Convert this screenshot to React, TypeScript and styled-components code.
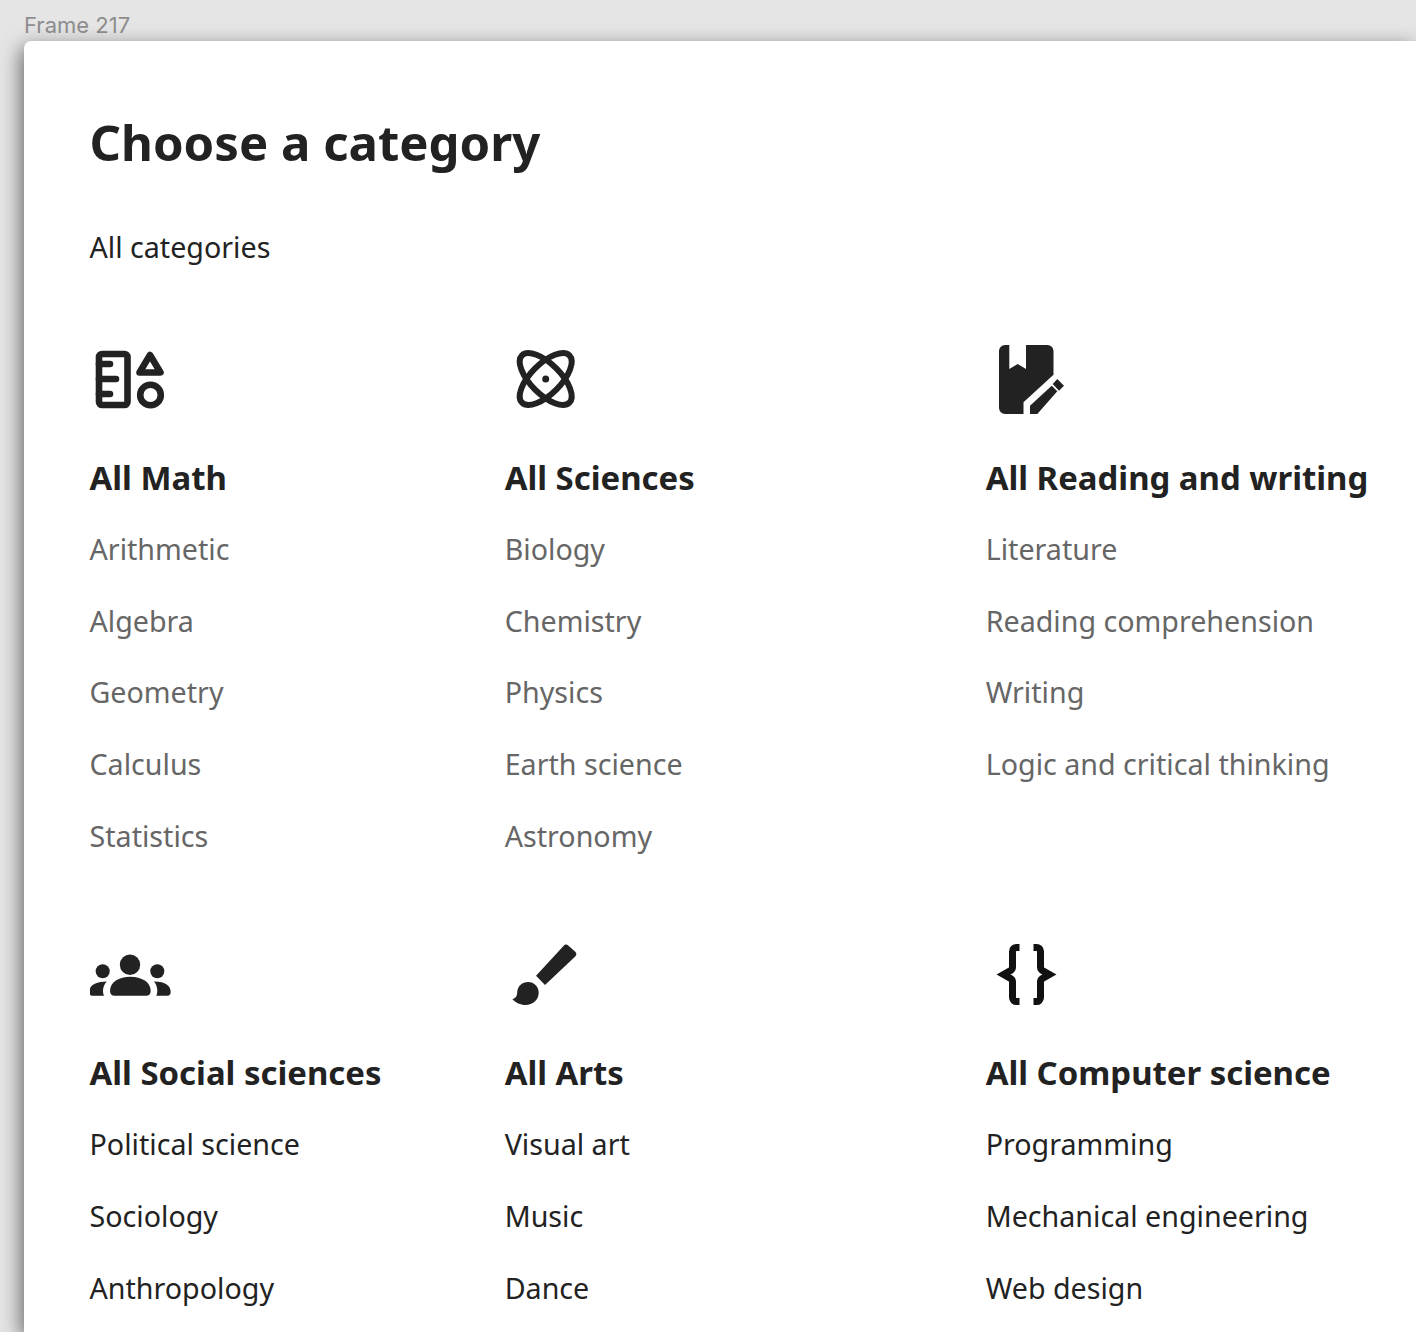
import React from "react";
import styled, { createGlobalStyle } from "styled-components";

const Global = createGlobalStyle`
  html, body { margin: 0; padding: 0; background: #e5e5e5; overflow: hidden; }
  body { font-family: "Noto Sans", sans-serif; }
`;

const Page = styled.div`
  height: 1332px;
  overflow: hidden;
  display: flex;
  flex-direction: column;
  background: #e5e5e5;
`;

const FrameLabel = styled.div`
  height: 41px;
  padding: 12px 0 0 24px;
  box-sizing: border-box;
  font-family: Inter, sans-serif;
  font-size: 22px;
  line-height: 26px;
  color: #8e8e8e;
`;

const Card = styled.main`
  flex: 1;
  margin-left: 24px;
  padding: 67.5px 0 0 65.5px;
  background: #fff;
  border-top-left-radius: 7px;
  box-shadow: -3px 6px 20px rgba(0, 0, 0, 0.55);
`;

const Title = styled.h1`
  margin: 0;
  font-size: 49.1px;
  line-height: 66px;
  font-weight: 700;
  color: #222222;
`;

const AllLink = styled.div`
  margin-top: 52.5px;
  font-size: 28.65px;
  line-height: 40px;
  color: #222222;
`;

const Grid = styled.div`
  margin-top: 76px;
  display: grid;
  grid-template-columns: 415.2px 481px 1fr;
  row-gap: 67px;
`;

const Section = styled.section`
  display: flex;
  flex-direction: column;
`;

const IconBox = styled.svg`
  display: block;
  width: 90px;
  height: 72px;
  margin-left: 0.5px;
  color: #222222;
`;

const Heading = styled.h2`
  margin: 41px 0 13.2px;
  font-size: 32.9px;
  line-height: 44px;
  font-weight: 700;
  color: #222222;
  white-space: nowrap;
`;

const Item = styled.div<{ $muted: boolean }>`
  height: 71.6px;
  line-height: 71.6px;
  font-size: 28.65px;
  color: ${(p) => (p.$muted ? "#666666" : "#222222")};
  white-space: nowrap;
`;

const MathIcon = () => (
  <IconBox viewBox="90 344 90 72" fill="none" stroke="currentColor" strokeWidth="6.6">
    <rect x="99" y="355" width="28.5" height="51" rx="3" />
    <path d="M99 365h11M99 380h17M99 395h11" strokeLinecap="round" />
    <path d="M150 356 L160.500 373.500 L139.500 373.500 Z" strokeLinejoin="round" />
    <circle cx="150.5" cy="396" r="10.3" />
  </IconBox>
);

const AtomIcon = () => (
  <IconBox viewBox="505 344 90 72" fill="none" stroke="currentColor" strokeWidth="6">
    <ellipse cx="545.7" cy="380" rx="33.5" ry="15" transform="rotate(45 545.7 380)" />
    <ellipse cx="545.7" cy="380" rx="33.5" ry="15" transform="rotate(-45 545.7 380)" />
    <circle cx="545.7" cy="380" r="3.5" fill="currentColor" stroke="none" />
  </IconBox>
);

const BookIcon = () => (
  <IconBox viewBox="986 344 90 72" fill="currentColor">
    <path d="M1005 346h4.3v24l8.4-5 8.3 5v-24h21.5a6 6 0 0 1 6 6v23.7l-30 27.6V415h-18.5a6 6 0 0 1-6-6v-57a6 6 0 0 1 6-6z" />
    <path d="M1030 406.7L1051.7 386.7 1057.3 392.3 1037.3 415H1030z" />
    <path d="M1052.7 385L1057.3 380 1064 386.7 1059 391.7z" />
  </IconBox>
);

const PeopleIcon = () => (
  <IconBox viewBox="90 939 90 72" fill="currentColor">
    <circle cx="130" cy="965.7" r="10.2" />
    <circle cx="102.7" cy="972.3" r="7" />
    <circle cx="157.3" cy="972.3" r="7" />
    <path d="M110 992c0-9 9-14.300 20.300-14.300S150.700 983 150.700 992c0 3-1.700 4.700-4.500 4.700h-31.700c-2.800 0-4.500-1.700-4.500-4.700z" />
    <path d="M89.300 993c0-6.500 5.500-10.300 17.400-10.600-2.200 2.500-3.700 5.800-3.700 9.600 0 1.800.3 3.400 1 4.700H92.500c-2 0-3.200-1.500-3.200-3.700z" />
    <path d="M170.700 993c0-6.500-5-10.300-16.700-10.600 2.200 2.500 3.300 5.800 3.300 9.600 0 1.800-.3 3.400-1 4.700h11.200c2 0 3.200-1.500 3.200-3.700z" />
  </IconBox>
);

const BrushIcon = () => (
  <IconBox viewBox="505 939 90 72" fill="currentColor">
    <path d="M536 976.700L563.500 947a3.500 3.500 0 0 1 5-.2l6.500 5.600a3.500 3.500 0 0 1 .2 5L545 986z" />
    <path d="M512.300 1000c4.200-.7 4.700-3.500 5-7.500.5-5.500 5-9.500 10.700-9.500 6.500 0 10.700 5 10.700 10.700 0 7-6 12.300-13.200 12.300-5 0-10-2.300-13.200-6z" />
  </IconBox>
);

const BracesIcon = () => (
  <IconBox viewBox="986 939 90 72" fill="none" stroke="#111111" strokeWidth="7">
    <path d="M1019.500 948.400h-3a4 4 0 0 0-4 4v15.800a4 4 0 0 1-1.900 3.300l-7 4 7 4a4 4 0 0 1 1.900 3.300v15.800a4 4 0 0 0 4 4h3" />
    <path d="M1033.500 948.400h3a4 4 0 0 1 4 4v15.800a4 4 0 0 0 1.900 3.300l7 4-7 4a4 4 0 0 0-1.900 3.300v15.800a4 4 0 0 1-4 4h-3" />
  </IconBox>
);

const sections = [
  { icon: <MathIcon />, title: "All Math", muted: true, items: ["Arithmetic", "Algebra", "Geometry", "Calculus", "Statistics"] },
  { icon: <AtomIcon />, title: "All Sciences", muted: true, items: ["Biology", "Chemistry", "Physics", "Earth science", "Astronomy"] },
  { icon: <BookIcon />, title: "All Reading and writing", muted: true, items: ["Literature", "Reading comprehension", "Writing", "Logic and critical thinking"] },
  { icon: <PeopleIcon />, title: "All Social sciences", muted: false, items: ["Political science", "Sociology", "Anthropology"] },
  { icon: <BrushIcon />, title: "All Arts", muted: false, items: ["Visual art", "Music", "Dance"] },
  { icon: <BracesIcon />, title: "All Computer science", muted: false, items: ["Programming", "Mechanical engineering", "Web design"] },
];

export default function App() {
  return (
    <Page>
      <Global />
      <FrameLabel>Frame 217</FrameLabel>
      <Card>
        <Title>Choose a category</Title>
        <AllLink>All categories</AllLink>
        <Grid>
          {sections.map((s) => (
            <Section key={s.title}>
              {s.icon}
              <Heading>{s.title}</Heading>
              {s.items.map((i) => (
                <Item key={i} $muted={s.muted}>{i}</Item>
              ))}
            </Section>
          ))}
        </Grid>
      </Card>
    </Page>
  );
}
